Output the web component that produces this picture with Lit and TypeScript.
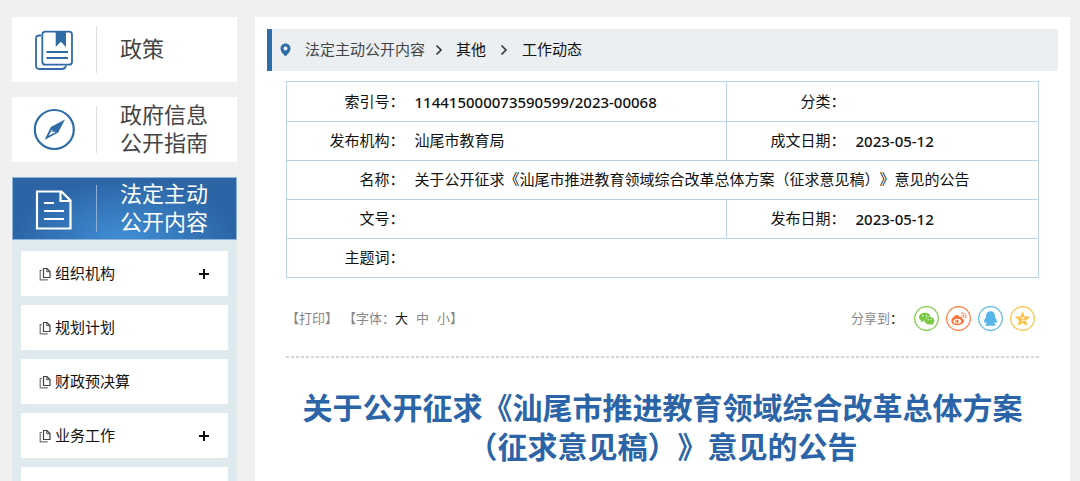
import { LitElement, html, css, svg, nothing } from "lit";
import { customElement, state } from "lit/decorators.js";
import { classMap } from "lit/directives/class-map.js";

const policyIcon = svg`
  <svg class="icon" viewBox="0 0 44 44" fill="none" stroke="#2f6ba5" stroke-width="1.800">
    <path d="M9 7.500H7.500Q4 7.500 4 10.500V37.500Q4 41 7.500 41H29.500Q33.500 41 34 37.500"/>
    <rect x="10.300" y="3.700" width="29.700" height="33" rx="3"/>
    <path d="M23.700 4H34V19L28.800 13.800L23.700 19Z" fill="#2f6ba5" stroke="none"/>
    <path d="M14.500 24H36M14.500 30H36" stroke-width="1.800"/>
  </svg>`;

const guideIcon = svg`
  <svg class="icon" viewBox="0 0 44 44" fill="none">
    <circle cx="22.300" cy="21.500" r="19.500" stroke="#2f6ba5" stroke-width="2.200"/>
    <path d="M33 11.500L26.200 24.500L12.500 32L18.800 19Z" fill="#2f6ba5"/>
    <path d="M20 21.500L23.500 24.200L16.500 27.800Z" fill="#fff"/>
    <circle cx="21.500" cy="22.800" r="1.300" fill="#2f6ba5"/>
  </svg>`;

const contentIcon = svg`
  <svg class="icon" viewBox="0 0 44 44" fill="none" stroke="#fff" stroke-width="2.200">
    <path d="M5 4.500H29.500L38.500 13.500V41.500H5Z"/>
    <path d="M28.500 5V14H38"/>
    <path d="M12 16H22M12 24H32M12 32H32"/>
  </svg>`;

const copyIcon = svg`
  <svg class="copy" viewBox="0 0 12 14" fill="none" stroke="#444">
    <path d="M4.500 1.500H8L11 4.500V10.500H4.500Z" stroke-width="1.200"/>
    <path d="M7.800 1.500V4.700H11"/>
    <path d="M3 3.500H1.200V12.800H8V12" stroke="#777" stroke-width="1.200"/>
  </svg>`;

const sections = [
  { lines: ["政策"], icon: policyIcon, active: false },
  { lines: ["政府信息", "公开指南"], icon: guideIcon, active: false },
  { lines: ["法定主动", "公开内容"], icon: contentIcon, active: true },
];

const topics = [
  { name: "组织机构", more: true },
  { name: "规划计划", more: false },
  { name: "财政预决算", more: false },
  { name: "业务工作", more: true },
];

const shares = [
  {
    name: "微信",
    color: "#7ac943",
    icon: svg`<path d="M10.800 6.700c-3.300 0-5.800 1.900-5.800 4.400 0 1.400.8 2.600 2 3.400l-.5 1.800 2.200-1.100 2 .3c-.4-3 2-5 6-5-.5-2.200-2.900-3.800-5.900-3.800Z"/>
      <path d="M15.600 10.900c-2.900 0-4.900 1.700-4.900 3.800s2 3.800 4.900 3.800l1.500-.2 2 1-.4-1.600c1-.7 1.700-1.800 1.700-3 0-2.100-2.100-3.800-4.800-3.800Z"/>
      <g fill="#fff"><circle cx="8.800" cy="9.700" r=".7"/><circle cx="12.500" cy="9.700" r=".7"/><circle cx="14.200" cy="13.700" r=".6"/><circle cx="17.100" cy="13.700" r=".6"/></g>`,
  },
  {
    name: "微博",
    color: "#ff763b",
    icon: svg`<path d="M9.800 9.300C7.500 10.300 5.300 13 5.300 15c0 2.600 2.900 4.300 6 4.300 4 0 6.700-2.200 6.700-4.500 0-1.300-1-2-2.100-2.300.5-1.400-.4-2.300-3-1.300.5-1.700-.8-2.800-3.100-1.900Z"/>
      <ellipse cx="11.300" cy="15.300" rx="3.800" ry="2.500" fill="#fff"/>
      <circle cx="10.900" cy="15.500" r="1.800"/>
      <circle cx="10.300" cy="15.900" r=".6" fill="#fff"/>
      <path d="M15.500 9.300q2.600-.3 2.500 2.500M15 7q5-.5 5.100 5.200" fill="none" stroke="#ff763b"/>`,
  },
  {
    name: "QQ",
    color: "#56b6e7",
    icon: svg`<path d="M12.500 5.200c-2.900 0-4.500 2-4.500 4.600v1.500c-1.300 1.500-2.200 3.500-1.900 5.400.8.300 1.300-.4 1.700-1l.8 1.700c-1 .5-1.500 2-.2 2.300h8.200c1.300-.3.800-1.800-.2-2.300l.8-1.700c.4.600.9 1.300 1.700 1 .3-1.900-.6-3.900-1.900-5.400V9.800c0-2.600-1.600-4.600-4.500-4.600Z"/>`,
  },
  {
    name: "QQ空间",
    color: "#fdbe3d",
    icon: svg`<path d="M12.500 5.500l2 4.800 5.700.4-4.200 3.500 1.300 5.500-4.800-2.700-4.800 2.700L9 14.200l-4.200-3.500 5.700-.4Z"/>
      <path d="M9.800 11.800h4.800l-3.300 3h4.200" fill="none" stroke="#fff" stroke-width=".9"/>`,
  },
];

@customElement("app-root")
export class AppRoot extends LitElement {
  @state() private size = "大";

  static styles = css`
    :host {
      display: block;
      min-height: 100vh;
      box-sizing: border-box;
      padding: 17px 10px 0 12px;
      background: #f0f0f0;
      color: #111;
      font: 400 15px/20px "Liberation Sans", "Noto Sans CJK SC", sans-serif;
      text-spacing-trim: space-all;
    }
    a { color: inherit; text-decoration: none; }
    button {
      font: inherit;
      color: inherit;
      background: none;
      border: 0;
      padding: 0;
      cursor: pointer;
    }
    .page {
      display: grid;
      grid-template-columns: 225px minmax(0, 1fr);
      gap: 18px;
      height: calc(100vh - 17px);
      overflow: hidden;
    }
    .side { display: flex; flex-direction: column; gap: 15px; }
    .section {
      display: flex;
      align-items: center;
      height: 65px;
      padding-left: 20px;
      box-sizing: border-box;
      background: #fff;
      color: #444;
      font-size: 22px;
      line-height: 28px;
    }
    .section.active {
      height: 63px;
      color: #fff;
      border: 1px solid #8fb4dc;
      padding-left: 19px;
      background: radial-gradient(ellipse 110px 60px at 50% 100%, #418ed5, #2b65a6);
    }
    .icon { width: 44px; height: 44px; }
    .label {
      display: flex;
      align-items: center;
      height: 47px;
      margin-left: 20px;
      padding-left: 23px;
      border-left: 1px solid #ddd;
    }
    .active .label { border-color: #8fb0d4; }
    .label span span { display: block; }
    .topics {
      display: flex;
      flex-direction: column;
      gap: 9px;
      flex: 1;
      margin: -15px 0 0;
      padding: 11px 9px 0;
      background: #dfeaef;
      list-style: none;
    }
    .topic {
      display: flex;
      align-items: center;
      height: 45px;
      flex: none;
      padding: 0 18px;
      background: #fff;
    }
    .topic a { flex: 1; }
    .copy { width: 12px; height: 14px; margin-right: 4px; }
    .plus { display: flex; }
    .plus svg { width: 12px; height: 12px; }
    .panel { background: #fff; padding: 12px 12px 0; }
    .crumbs {
      display: flex;
      align-items: center;
      height: 42px;
      padding-left: 8px;
      border-left: 5px solid #2f6fa8;
      background: #ebeff2;
    }
    .pin { width: 11px; height: 14px; margin-right: 14px; }
    .chev { width: 8px; height: 12px; margin: 0 14px; }
    .chev.near { margin-left: 10px; margin-right: 13px; }
    .crumbs .root { color: #444; }
    .article { padding: 10px 19px 0; }
    table {
      width: 100%;
      table-layout: fixed;
      border-collapse: collapse;
      border: 1px solid #b9d3e8;
    }
    tr { height: 39px; border-bottom: 1px solid #b9d3e8; }
    tr:first-child { height: 40px; }
    th, td { padding: 0; font-weight: inherit; }
    th { text-align: right; }
    td { padding-left: 10px; }
    .name { width: 118px; }
    .name2 { width: 119px; }
    .date { width: 193px; }
    .split { border-left: 1px solid #b9d3e8; }
    .num { font-family: "Noto Sans", sans-serif; font-weight: 500; }
    .tools {
      display: flex;
      align-items: center;
      justify-content: space-between;
      height: 78px;
      padding-top: 3px;
      box-sizing: border-box;
      color: #888;
      font-size: 13px;
    }
    .left, .share { display: flex; align-items: center; }
    .left { gap: 5px; }
    .sizes { display: flex; }
    .sizes button { margin-right: 8px; }
    .sizes button:last-of-type { margin-right: 0; }
    .sizes .on { color: #111; }
    .share { gap: 7px; padding-right: 4px; }
    .share span { margin-right: 2px; }
    .share .colon { color: #111; }
    .share svg { display: block; width: 25px; height: 25px; }
    .rule {
      height: 2px;
      margin: 0;
      border: 0;
      background: repeating-linear-gradient(90deg, #d5d5d5 0 3px, transparent 3px 5px);
    }
    h1 {
      margin: 31px 0 0;
      color: #2b65a7;
      font-size: 30px;
      line-height: 39px;
      font-weight: 700;
      text-align: center;
    }
  `;

  private chevron(near = false) {
    return html`<svg class=${classMap({ chev: true, near })} viewBox="0 0 8 12" fill="none"
      stroke="#333" stroke-width="1.600"><path d="M1.500 1.500L6 6L1.500 10.500"/></svg>`;
  }

  render() {
    return html`
      <div class="page">
        <nav class="side">
          ${sections.map(
            (s) => html`<a href="#" class=${classMap({ section: true, active: s.active })}>
              ${s.icon}<span class="label"><span>${s.lines.map((l) => html`<span>${l}</span>`)}</span></span>
            </a>`
          )}
          <ul class="topics">
            ${topics.map(
              (t) => html`<li class="topic">${copyIcon}<a href="#">${t.name}</a>
                ${t.more
                  ? html`<button class="plus" aria-label="展开">
                      <svg viewBox="0 0 12 12" stroke="#111" stroke-width="2"><path d="M1 6H11M6 1V11"/></svg>
                    </button>`
                  : nothing}
              </li>`
            )}
            <li class="topic"></li>
          </ul>
        </nav>
        <main class="panel">
          <nav class="crumbs">
            <svg class="pin" viewBox="0 0 11 14"><path fill="#2f6fa8" fill-rule="evenodd"
              d="M5.500.5C2.700.5.500 2.700.500 5.500.500 8.500 3 11 5.500 13.500 8 11 10.500 8.500 10.500 5.500 10.500 2.700 8.300.500 5.500.500ZM5.500 3.500a2 2 0 1 1 0 4 2 2 0 0 1 0-4Z"/></svg>
            <a class="root" href="#">法定主动公开内容</a>${this.chevron(true)}
            <a href="#">其他</a>${this.chevron()}
            <a href="#">工作动态</a>
          </nav>
          <article class="article">
            <table>
              <colgroup><col class="name"><col><col class="name2"><col class="date"></colgroup>
              <tbody>
                <tr><th scope="row">索引号：</th><td class="num">114415000073590599/2023-00068</td>
                  <th scope="row" class="split">分类：</th><td></td></tr>
                <tr><th scope="row">发布机构：</th><td>汕尾市教育局</td>
                  <th scope="row" class="split">成文日期：</th><td class="num">2023-05-12</td></tr>
                <tr><th scope="row">名称：</th>
                  <td colspan="3">关于公开征求《汕尾市推进教育领域综合改革总体方案（征求意见稿）》意见的公告</td></tr>
                <tr><th scope="row">文号：</th><td></td>
                  <th scope="row" class="split">发布日期：</th><td class="num">2023-05-12</td></tr>
                <tr><th scope="row">主题词：</th><td colspan="3"></td></tr>
              </tbody>
            </table>
            <div class="tools">
              <div class="left">
                <button>【打印】</button>
                <div class="sizes"><span>【字体：</span>${["大", "中", "小"].map(
                  (s) => html`<button class=${classMap({ on: this.size === s })}
                    @click=${() => (this.size = s)}>${s}</button>`
                )}<span>】</span></div>
              </div>
              <div class="share">
                <span>分享到<span class="colon">：</span></span>
                ${shares.map(
                  (s) => html`<a href="#" aria-label=${s.name}><svg viewBox="0 0 25 25" fill=${s.color}>
                    <circle cx="12.500" cy="12.500" r="11.800" fill="none" stroke=${s.color} stroke-width="1.200"/>
                    ${s.icon}</svg></a>`
                )}
              </div>
            </div>
            <hr class="rule">
            <h1>关于公开征求《汕尾市推进教育领域综合改革总体方案（征求意见稿）》意见的公告</h1>
          </article>
        </main>
      </div>`;
  }
}
